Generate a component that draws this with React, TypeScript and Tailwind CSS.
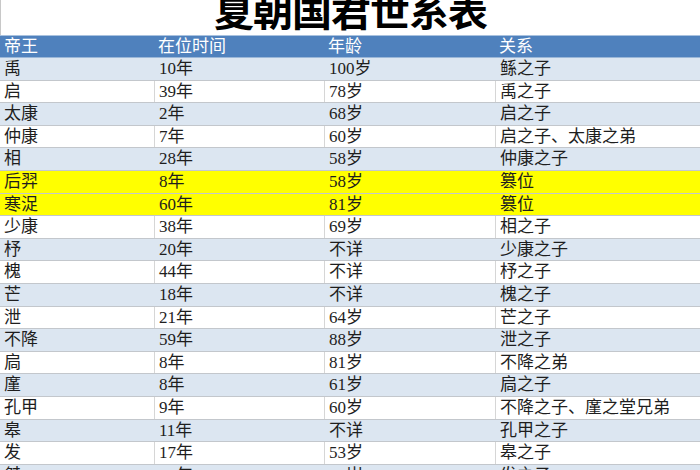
type Row = {
  name: string
  reign: string
  age: string
  relation: string
  highlight?: boolean
}

const ROWS: Row[] = [
  { name: "禹", reign: "10年", age: "100岁", relation: "鲧之子" },
  { name: "启", reign: "39年", age: "78岁", relation: "禹之子" },
  { name: "太康", reign: "2年", age: "68岁", relation: "启之子" },
  { name: "仲康", reign: "7年", age: "60岁", relation: "启之子、太康之弟" },
  { name: "相", reign: "28年", age: "58岁", relation: "仲康之子" },
  { name: "后羿", reign: "8年", age: "58岁", relation: "篡位", highlight: true },
  { name: "寒浞", reign: "60年", age: "81岁", relation: "篡位", highlight: true },
  { name: "少康", reign: "38年", age: "69岁", relation: "相之子" },
  { name: "杼", reign: "20年", age: "不详", relation: "少康之子" },
  { name: "槐", reign: "44年", age: "不详", relation: "杼之子" },
  { name: "芒", reign: "18年", age: "不详", relation: "槐之子" },
  { name: "泄", reign: "21年", age: "64岁", relation: "芒之子" },
  { name: "不降", reign: "59年", age: "88岁", relation: "泄之子" },
  { name: "扃", reign: "8年", age: "81岁", relation: "不降之弟" },
  { name: "廑", reign: "8年", age: "61岁", relation: "扃之子" },
  { name: "孔甲", reign: "9年", age: "60岁", relation: "不降之子、廑之堂兄弟" },
  { name: "皋", reign: "11年", age: "不详", relation: "孔甲之子" },
  { name: "发", reign: "17年", age: "53岁", relation: "皋之子" },
  { name: "桀", reign: "52年", age: "50岁", relation: "发之子" },
]

const GRID = "grid grid-cols-[154px_170px_171px_1fr]"

function rowBg(row: Row, i: number) {
  if (row.highlight) return "bg-[#ffff00]"
  return i % 2 === 0 ? "bg-[#dce6f1]" : "bg-white"
}

export default function App() {
  return (
    <div
      className="w-[700px] h-[470px] overflow-hidden bg-white text-[#1e1e1e]"
      style={{ fontFamily: '"Liberation Serif", "Noto Sans CJK SC", serif' }}
    >
      {/* title, top clipped like the source image */}
      <div className="h-[35px] overflow-hidden border-l border-[#c8c8c8] flex justify-center">
        <h1
          className="mt-[-13px] h-[48px] text-[40px] leading-[44px] font-bold text-black tracking-[-1px]"
          style={{ fontFamily: '"Noto Sans CJK SC", serif' }}
        >
          夏朝国君世系表
        </h1>
      </div>

      <div className="border-t border-[#a9c2df]">
        <div className={`${GRID} h-[22px] bg-[#4f81bd] text-white text-[17px] leading-[22px] border-b border-[#9bb7d8]`}>
          <div className="pl-[4px]">帝王</div>
          <div className="pl-[4px]">在位时间</div>
          <div className="pl-[4px]">年龄</div>
          <div className="pl-[4px]">关系</div>
        </div>

        {ROWS.map((row, i) => {
          const white = !row.highlight && i % 2 === 1
          const cell = `pl-[4px] ${white ? "border-l border-[#d6d6d6]" : "border-l border-transparent"}`
          return (
            <div
              key={row.name}
              className={`${GRID} h-[22.6px] text-[17px] leading-[21px] border-b border-[#c3c7cc] ${rowBg(row, i)}`}
            >
              <div className="pl-[4px]">{row.name}</div>
              <div className={cell}>{row.reign}</div>
              <div className={cell}>{row.age}</div>
              <div className={cell}>{row.relation}</div>
            </div>
          )
        })}
      </div>
    </div>
  )
}
